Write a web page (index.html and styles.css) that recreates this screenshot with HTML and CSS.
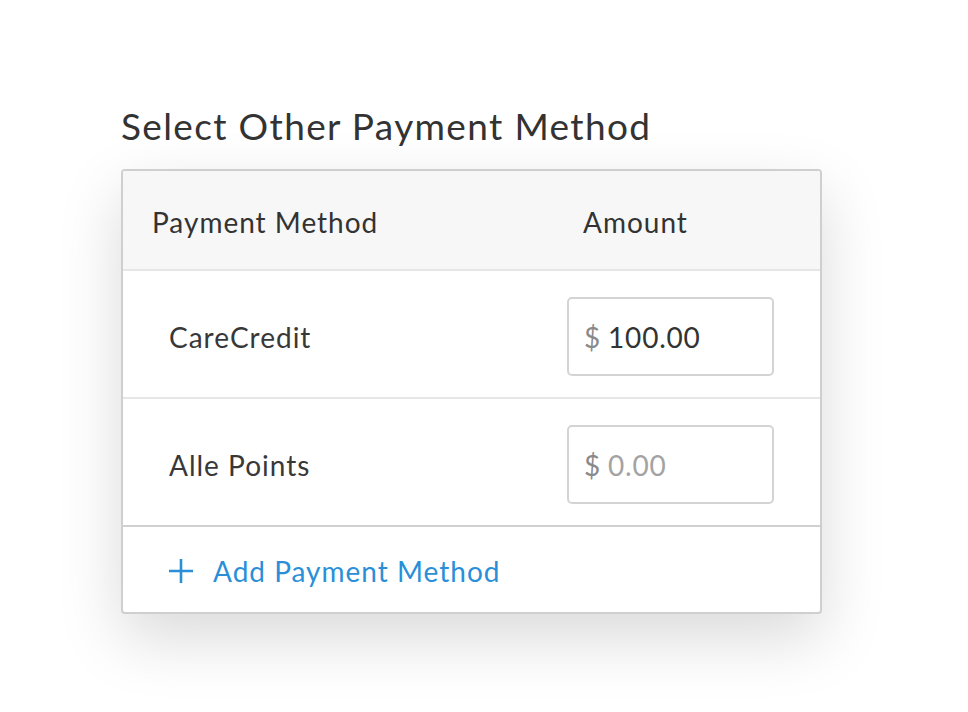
FILE: index.html
```html
<!DOCTYPE html>
<html>
<head>
<meta charset="utf-8">
<link rel="stylesheet" href="styles.css">
</head>
<body>
<main class="page">
  <h1 class="title">Select Other Payment Method</h1>
  <section class="card">
    <div class="row head">
      <span class="col-method">Payment Method</span>
      <span class="col-amount">Amount</span>
    </div>
    <div class="row item">
      <span class="name">CareCredit</span>
      <div class="amount-input"><span class="cur">$</span><span class="val">100.00</span></div>
    </div>
    <div class="row item last">
      <span class="name">Alle Points</span>
      <div class="amount-input"><span class="cur">$</span><span class="val placeholder">0.00</span></div>
    </div>
    <div class="row foot">
      <svg class="plus" width="24" height="24" viewBox="0 0 24 24"><path d="M12 0v24M0 12h24" stroke="#2a8fd8" stroke-width="2.6" fill="none"/></svg>
      <span class="add">Add Payment Method</span>
    </div>
  </section>
</main>
</body>
</html>
```
FILE: styles.css
```css
html, body { margin: 0; padding: 0; background: #fff; }
body { font-family: Lato, "Liberation Sans", sans-serif; color: #333; }
.page {
  padding: 104px 0 0 121px;
  min-height: 712px;
  box-sizing: border-box;
}
.title {
  margin: 0 0 21px 0;
  font-size: 37px;
  font-weight: 400;
  line-height: 44px;
  color: #333;
  letter-spacing: 1.35px;
}
.card {
  width: 697px;
  border: 2px solid #cfcfcf;
  border-radius: 4px;
  background: #fff;
  box-shadow: 0 24px 64px rgba(0,0,0,0.15);
  overflow: hidden;
}
.row { display: flex; align-items: center; box-sizing: border-box; }
.head {
  height: 100px;
  padding-top: 3px;
  background: #f7f7f7;
  border-bottom: 2px solid #e6e6e6;
  font-size: 28px;
  letter-spacing: 1px;
  color: #333;
}
.col-method { margin-left: 29px; width: 431px; }
.item {
  height: 128px;
  border-bottom: 2px solid #e6e6e6;
  font-size: 28px;
  letter-spacing: 1px;
  justify-content: space-between;
  padding: 5px 46px 0 46px;
  color: #383838;
}
.item.last { border-bottom-color: #d0d0d0; }
.amount-input {
  box-sizing: border-box;
  width: 207px;
  height: 79px;
  border: 2px solid #d4d4d4;
  border-radius: 5px;
  display: flex;
  align-items: center;
  padding-left: 15px;
  font-size: 28px;
  letter-spacing: 0.8px;
}
.cur { color: #8a8a8a; margin-right: 7px; }
.val { color: #333; }
.val.placeholder { color: #a3a3a3; }
.foot {
  height: 85px;
  padding: 3px 0 0 46px;
  font-size: 28px;
  letter-spacing: 1px;
  color: #2a8fd8;
}
.plus { margin-right: 20px; }
```
